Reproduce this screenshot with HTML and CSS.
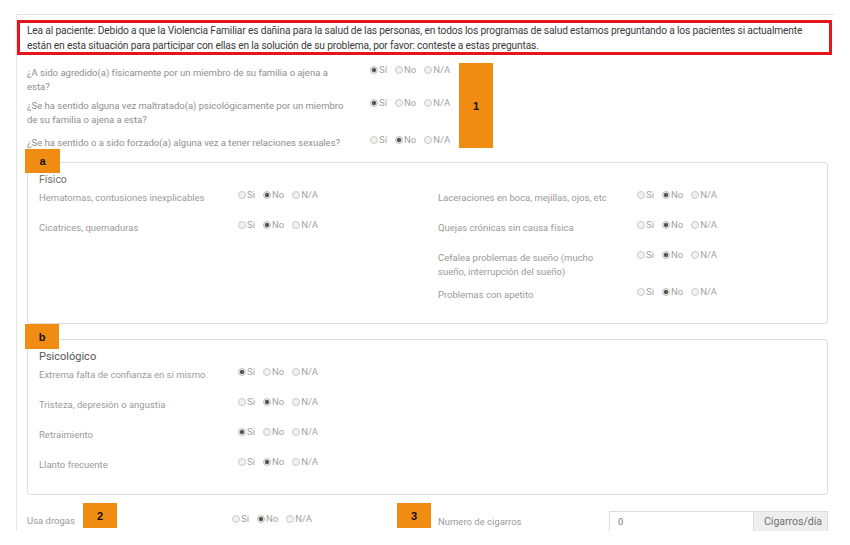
FILE: index.html
```html
<!DOCTYPE html>
<html lang="es">
<head>
<meta charset="utf-8">
<title>Violencia Familiar</title>
<link rel="stylesheet" href="styles.css">
</head>
<body>
<div class="page">
  <div class="notice">Lea al paciente: Debido a que la Violencia Familiar es dañina para la salud de las personas, en todos los programas de salud estamos preguntando a los pacientes si actualmente están en esta situación para participar con ellas en la solución de su problema, por favor: conteste a estas preguntas.</div>

  <div class="content">
    <div class="q-list">
      <div class="q-row">
        <div class="q-text">¿A sido agredido(a) físicamente por un miembro de su familia o ajena a esta?</div>
        <div class="radios"><span class="opt"><span class="rb on"></span>Sí</span><span class="opt"><span class="rb"></span>No</span><span class="opt"><span class="rb"></span>N/A</span></div>
      </div>
      <div class="q-row q-row-spaced">
        <div class="q-text">¿Se ha sentido alguna vez maltratado(a) psicológicamente por un miembro de su familia o ajena a esta?</div>
        <div class="radios"><span class="opt"><span class="rb on"></span>Sí</span><span class="opt"><span class="rb"></span>No</span><span class="opt"><span class="rb"></span>N/A</span></div>
      </div>
      <div class="q-row">
        <div class="q-text">¿Se ha sentido o a sido forzado(a) alguna vez a tener relaciones sexuales?</div>
        <div class="radios"><span class="opt"><span class="rb"></span>Sí</span><span class="opt"><span class="rb on"></span>No</span><span class="opt"><span class="rb"></span>N/A</span></div>
      </div>
    </div>

    <section class="panel">
      <div class="panel-title">Físico</div>
      <div class="cols">
        <div class="col">
          <div class="p-row"><div class="p-label">Hematomas, contusiones inexplicables</div><div class="radios p-radios"><span class="opt"><span class="rb"></span>Si</span><span class="opt"><span class="rb on"></span>No</span><span class="opt"><span class="rb"></span>N/A</span></div></div>
          <div class="p-row"><div class="p-label">Cicatrices, quemaduras</div><div class="radios p-radios"><span class="opt"><span class="rb"></span>Si</span><span class="opt"><span class="rb on"></span>No</span><span class="opt"><span class="rb"></span>N/A</span></div></div>
        </div>
        <div class="col">
          <div class="p-row"><div class="p-label">Laceraciones en boca, mejillas, ojos, etc</div><div class="radios p-radios"><span class="opt"><span class="rb"></span>Si</span><span class="opt"><span class="rb on"></span>No</span><span class="opt"><span class="rb"></span>N/A</span></div></div>
          <div class="p-row"><div class="p-label">Quejas crónicas sin causa física</div><div class="radios p-radios"><span class="opt"><span class="rb"></span>Si</span><span class="opt"><span class="rb on"></span>No</span><span class="opt"><span class="rb"></span>N/A</span></div></div>
          <div class="p-row p-row-tall"><div class="p-label">Cefalea problemas de sueño (mucho sueño, interrupción del sueño)</div><div class="radios p-radios"><span class="opt"><span class="rb"></span>Si</span><span class="opt"><span class="rb on"></span>No</span><span class="opt"><span class="rb"></span>N/A</span></div></div>
          <div class="p-row"><div class="p-label">Problemas con apetito</div><div class="radios p-radios"><span class="opt"><span class="rb"></span>Si</span><span class="opt"><span class="rb on"></span>No</span><span class="opt"><span class="rb"></span>N/A</span></div></div>
        </div>
      </div>
    </section>

    <section class="panel panel-psico">
      <div class="panel-title panel-title-dark">Psicológico</div>
      <div class="cols">
        <div class="col">
          <div class="p-row"><div class="p-label">Extrema falta de confianza en si mismo</div><div class="radios p-radios"><span class="opt"><span class="rb on"></span>Si</span><span class="opt"><span class="rb"></span>No</span><span class="opt"><span class="rb"></span>N/A</span></div></div>
          <div class="p-row"><div class="p-label">Tristeza, depresión o angustia</div><div class="radios p-radios"><span class="opt"><span class="rb"></span>Si</span><span class="opt"><span class="rb on"></span>No</span><span class="opt"><span class="rb"></span>N/A</span></div></div>
          <div class="p-row"><div class="p-label">Retraimiento</div><div class="radios p-radios"><span class="opt"><span class="rb on"></span>Si</span><span class="opt"><span class="rb"></span>No</span><span class="opt"><span class="rb"></span>N/A</span></div></div>
          <div class="p-row"><div class="p-label">Llanto frecuente</div><div class="radios p-radios"><span class="opt"><span class="rb"></span>Si</span><span class="opt"><span class="rb on"></span>No</span><span class="opt"><span class="rb"></span>N/A</span></div></div>
        </div>
        <div class="col"></div>
      </div>
    </section>

    <div class="bottom-row">
      <div class="b-left">
        <div class="b-label">Usa drogas</div>
        <div class="radios b-radios"><span class="opt"><span class="rb"></span>Si</span><span class="opt"><span class="rb on"></span>No</span><span class="opt"><span class="rb"></span>N/A</span></div>
      </div>
      <div class="b-right">
        <div class="b-label b-label-cig">Numero de cigarros</div>
        <div class="input-group">
          <div class="input-field">0</div>
          <div class="input-addon">Cigarros/día</div>
        </div>
      </div>
    </div>
  </div>

  <div class="badge badge-1">1</div>
  <div class="badge badge-a">a</div>
  <div class="badge badge-b">b</div>
  <div class="badge badge-2">2</div>
  <div class="badge badge-3">3</div>
</div>
</body>
</html>
```

FILE: styles.css
```css
* { box-sizing: border-box; }

html, body {
  margin: 0;
  padding: 0;
  background: #ffffff;
}

body {
  font-family: Roboto, "Liberation Sans", Arial, sans-serif;
  color: #333;
}

.page {
  position: relative;
  margin: 14px 0 0 16px;
  width: 819px;
  height: 517px;
  border-top: 1px solid #e6e6e6;
  border-left: 1px solid #e6e6e6;
  overflow: hidden;
}

.notice {
  margin-top: 5px;
  width: 815px;
  height: 35px;
  border: 3px solid #e3151d;
  padding: 1px 0 0 7px;
  font-size: 10.2px;
  letter-spacing: -0.15px;
  line-height: 14.5px;
  color: #3a3a3a;
}

.content {
  padding: 0 7px 0 10px;
}

/* top questions */
.q-list {
  margin-top: 8px;
}

.q-row {
  display: flex;
  align-items: flex-start;
  margin-bottom: 2px;
}

.q-row-spaced {
  margin-bottom: 6px;
}

.q-text {
  flex: 0 0 343px;
  padding: 3px 25px 0 0;
  font-size: 9.5px;
  line-height: 14px;
  color: #8e8e8e;
}

/* radios */
.radios {
  display: flex;
  align-items: center;
  line-height: 14px;
  font-size: 9.5px;
  color: #a2a2a2;
}

.opt {
  display: inline-flex;
  align-items: center;
  margin-right: 8px;
}

.rb {
  display: inline-block;
  width: 8px;
  height: 8px;
  margin-right: 1px;
  border-radius: 50%;
  border: 1px solid #c9c9c9;
  background: #f1f1f1;
}

.rb.on {
  background: radial-gradient(circle, #555 0, #555 1.8px, #e9e9e9 2.5px);
  border-color: #bdbdbd;
}

/* panels */
.panel {
  margin-top: 12px;
  width: 801px;
  border: 1px solid #dedede;
  border-radius: 3px;
  padding: 10px 0 9px 11px;
}

.panel-psico {
  margin-top: 15px;
  padding-bottom: 10px;
}

.panel-title {
  font-size: 10.5px;
  line-height: 14px;
  color: #6f6f6f;
}

.panel-title-dark {
  font-size: 11px;
  color: #555;
}

.cols {
  display: grid;
  grid-template-columns: 399px 1fr;
}

.p-row {
  display: flex;
  align-items: flex-start;
  height: 30px;
}

.p-row-tall {
  height: 37px;
}

.p-label {
  flex: 0 0 199px;
  padding: 4px 27px 0 0;
  font-size: 9.5px;
  line-height: 14px;
  color: #9a9a9a;
}

.p-radios {
  padding-top: 1px;
}

/* bottom row */
.bottom-row {
  display: flex;
  margin-top: 16px;
  height: 22px;
}

.b-left {
  flex: 0 0 411px;
  display: flex;
  align-items: flex-start;
}

.b-left .b-label {
  flex: 0 0 205px;
}

.b-label {
  padding-top: 3px;
  font-size: 9.5px;
  line-height: 14px;
  color: #9a9a9a;
}

.b-radios {
  padding-top: 1px;
}

.b-right {
  display: flex;
  align-items: flex-start;
}

.b-label-cig {
  flex: 0 0 171px;
  padding-top: 4px;
}

.input-group {
  display: flex;
  height: 22px;
}

.input-field {
  width: 144px;
  border: 1px solid #dcdcdc;
  border-right: none;
  padding: 4px 0 0 8px;
  font-size: 9.5px;
  color: #777;
  background: #fff;
}

.input-addon {
  width: 75px;
  border: 1px solid #dcdcdc;
  background: #eeeeee;
  padding: 3px 0 0 10px;
  font-size: 10.5px;
  color: #6e6e6e;
}

/* annotation badges */
.badge {
  position: absolute;
  background: #f08c12;
  color: #111;
  font-family: "Liberation Sans", Arial, sans-serif;
  font-weight: bold;
  font-size: 11px;
  display: flex;
  align-items: center;
  justify-content: center;
}

.badge-1 { left: 442px; top: 48px; width: 34px; height: 85px; }
.badge-a { left: 8px; top: 134px; width: 35px; height: 24px; }
.badge-b { left: 8px; top: 309px; width: 34px; height: 25px; }
.badge-2 { left: 66px; top: 488px; width: 34px; height: 25px; }
.badge-3 { left: 380px; top: 488px; width: 34px; height: 25px; }
```
